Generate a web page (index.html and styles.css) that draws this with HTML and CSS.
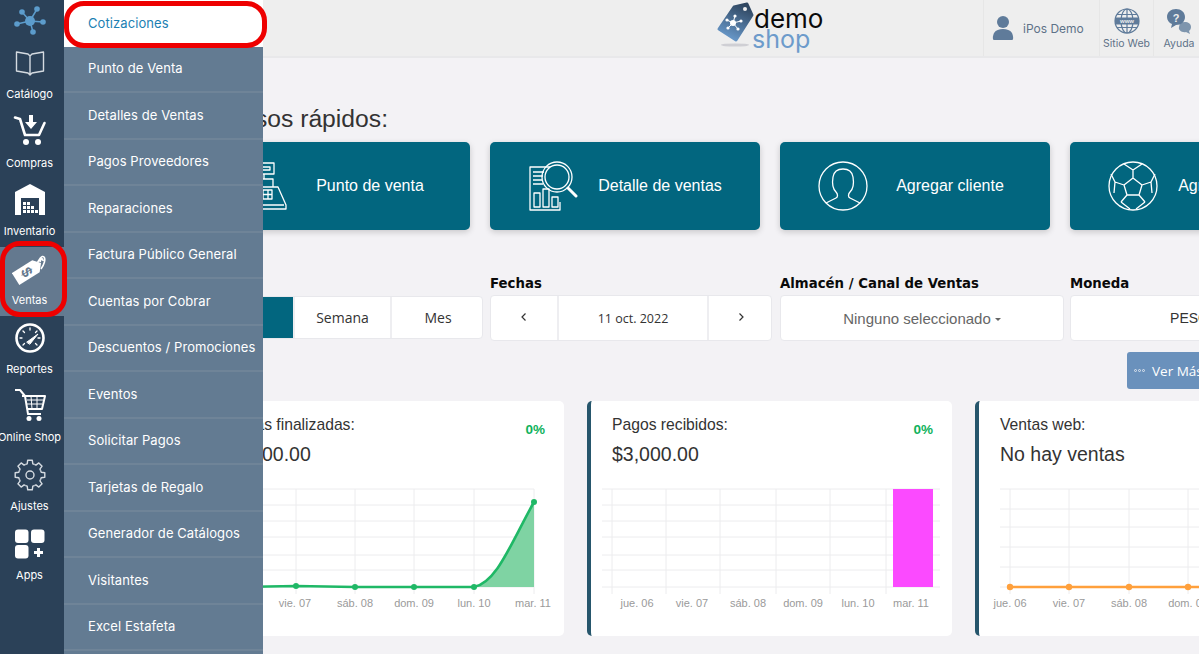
FILE: index.html
```html
<!DOCTYPE html>
<html lang="es">
<head>
    <meta charset="UTF-8">
    <meta name="viewport" content="width=device-width, initial-scale=1.0">
    <title>iPos Demo</title>
    <link rel="stylesheet" href="styles.css">
</head>
<body>
    <nav class="sidebar">
        <div class="brand">
            <svg width="36" height="36" viewBox="0 0 36 36" class="net">
                <path d="M18 18L10 9M18 18L25 6M18 18L31 19M18 18L21 29M18 18L5 21"/>
                <circle cx="18" cy="18" r="5"/><circle cx="10" cy="9" r="2.8"/><circle cx="25" cy="6" r="2.8"/>
                <circle cx="31" cy="19" r="2.8"/><circle cx="21" cy="29" r="2.8"/><circle cx="5" cy="21" r="2.8"/>
            </svg>
        </div>
        <a class="nav-item">
            <svg width="36" height="36" viewBox="0 0 36 36" class="thin">
                <path d="M4.5 7L16 9L18 11L20 9L31.5 7V26L20 28L18 30L16 28L4.5 26ZM18 11V30"/>
            </svg>
            <span>Catálogo</span>
        </a>
        <a class="nav-item">
            <svg width="36" height="36" viewBox="0 0 36 36" class="bold">
                <path d="M3 3.5L8 5L13 21H27L32.5 9"/>
                <circle class="solid" cx="14" cy="28" r="3"/><circle class="solid" cx="26" cy="28" r="3"/>
                <path class="solid" d="M17 1H21V8H25L19 15L13 8H17Z"/>
            </svg>
            <span>Compras</span>
        </a>
        <a class="nav-item">
            <svg width="36" height="36" viewBox="0 0 36 36">
                <path class="solid" d="M3 10L18 2L33 10V33H27V16H9V33H3Z"/>
                <path class="solid" d="M11 24h3v3h-3zM15 24h3v3h-3zM19 28h3v3h-3zM11 28h3v3h-3zM15 28h3v3h-3zM23 28h3v3h-3zM11 20h3v3h-3zM15 20h3v3h-3zM19 24h3v3h-3z"/>
            </svg>
            <span>Inventario</span>
        </a>
        <a class="nav-item active">
            <svg width="36" height="36" viewBox="0 0 36 36">
                <g transform="rotate(-32 18 19)">
                    <path class="solid" d="M1 12H25L31 19L25 26H1Z"/>
                    <text x="14" y="24" class="tag-sign" transform="rotate(90 14 19)">$</text>
                </g>
                <path class="loop" d="M24 15C27 8 30 4 32 6C34 8 32 14 29 18M28 11C29 7 31 7 31 10"/>
            </svg>
            <span>Ventas</span>
            <i class="ring ring-nav"></i>
        </a>
        <a class="nav-item">
            <svg width="36" height="36" viewBox="0 0 36 36" class="bold">
                <circle cx="18" cy="18" r="13.5" class="gauge"/>
                <path class="ticks" d="M18 8v2M11 11l1.5 1.5M8 18h2M26 18h2M25 11l-1.5 1.5M11 25l1.5-1.5M25 25l-1.5-1.5"/>
                <path class="needle" d="M15 22L26 14L18 24Z"/>
            </svg>
            <span>Reportes</span>
        </a>
        <a class="nav-item">
            <svg width="36" height="36" viewBox="0 0 36 36" class="cart">
                <path d="M3 2H8L13 8L16 26H29M10 8H33L30 21H15"/>
                <path class="cart-grid" d="M15 12H31M15 16H30M19 8L20 21M25 8V21"/>
                <circle class="solid" cx="17" cy="30.5" r="2.5"/><circle class="solid" cx="27" cy="30.5" r="2.5"/>
            </svg>
            <span>Online Shop</span>
        </a>
        <a class="nav-item">
            <svg width="36" height="36" viewBox="0 0 36 36" class="thin">
                <defs><path id="tooth" d="M13.6 7.4L15.2 6.8L15.7 3.2H20.3L20.8 6.8L22.4 7.4"/></defs>
                <use href="#tooth"/><use href="#tooth" transform="rotate(45 18 18)"/><use href="#tooth" transform="rotate(90 18 18)"/>
                <use href="#tooth" transform="rotate(135 18 18)"/><use href="#tooth" transform="rotate(180 18 18)"/><use href="#tooth" transform="rotate(225 18 18)"/>
                <use href="#tooth" transform="rotate(270 18 18)"/><use href="#tooth" transform="rotate(315 18 18)"/>
                <circle cx="18" cy="18" r="4"/>
            </svg>
            <span>Ajustes</span>
        </a>
        <a class="nav-item">
            <svg width="36" height="36" viewBox="0 0 36 36">
                <rect class="solid" x="3" y="3.5" width="13.5" height="13.5" rx="3"/><rect class="solid" x="19" y="3.5" width="13.5" height="13.5" rx="3"/>
                <rect class="solid" x="3" y="19" width="13.5" height="13.5" rx="3"/>
                <path class="solid" d="M25 22h3v3h3v3h-3v3h-3v-3h-3v-3h3z"/>
            </svg>
            <span>Apps</span>
        </a>
    </nav>

    <ul class="submenu">
        <li class="current">Cotizaciones<i class="ring ring-menu"></i></li>
        <li>Punto de Venta</li>
        <li>Detalles de Ventas</li>
        <li>Pagos Proveedores</li>
        <li>Reparaciones</li>
        <li>Factura Público General</li>
        <li>Cuentas por Cobrar</li>
        <li>Descuentos / Promociones</li>
        <li>Eventos</li>
        <li>Solicitar Pagos</li>
        <li>Tarjetas de Regalo</li>
        <li>Generador de Catálogos</li>
        <li>Visitantes</li>
        <li>Excel Estafeta</li>
    </ul>

    <div class="main">
        <header class="topbar">
            <div class="logo">
                <svg width="38" height="50" viewBox="0 0 38 50">
                    <defs>
                        <linearGradient id="tagfill" x1="0.7" y1="0" x2="0.3" y2="1">
                            <stop offset="0" stop-color="#2f4660"/><stop offset="1" stop-color="#6a9bcd"/>
                        </linearGradient>
                    </defs>
                    <ellipse cx="19" cy="45" rx="14" ry="1.6" fill="#cfcfd4"/>
                    <path d="M18 7L31 4L36 15L20 40L3 29Z" fill="url(#tagfill)" stroke="url(#tagfill)" stroke-width="3" stroke-linejoin="round"/>
                    <circle cx="29" cy="9" r="2" fill="#eeeeee"/>
                    <g class="logo-net">
                        <path d="M17 23L11 20M17 23L19 16M17 23L25 21M17 23L22 29M17 23L12 28"/>
                        <circle cx="17" cy="23" r="3"/><circle cx="11" cy="20" r="1.6"/><circle cx="19" cy="16" r="1.6"/>
                        <circle cx="25" cy="21" r="1.6"/><circle cx="22" cy="29" r="1.6"/><circle cx="12" cy="28" r="1.6"/>
                    </g>
                </svg>
                <div class="logo-text"><span class="demo">demo</span><span class="shop">shop</span></div>
            </div>
            <div class="top-actions">
                <div class="top-user">
                    <svg width="22" height="26" viewBox="0 0 22 26" class="top-icon">
                        <circle cx="11" cy="7" r="6"/>
                        <path d="M2 25C0 25 1 20 2 18C4 15 7 14 11 14C15 14 18 15 20 18C21 20 22 25 20 25Z"/>
                    </svg>
                    <span>iPos Demo</span>
                </div>
                <div class="top-link">
                    <svg width="26" height="26" viewBox="0 0 26 26" class="globe">
                        <circle cx="13" cy="13" r="12"/>
                        <ellipse cx="13" cy="13" rx="6" ry="12"/>
                        <path d="M13 1V25M3 6.5H23M3 19.5H23"/>
                        <rect class="band" x="1" y="9.5" width="24" height="7"/>
                        <text x="13" y="15.4" class="www">www</text>
                    </svg>
                    <span>Sitio Web</span>
                </div>
                <div class="top-link">
                    <svg width="26" height="26" viewBox="0 0 26 26" class="top-icon">
                        <path d="M14 15C19 13 25 14 25 19C25 21 24 22 23 23L24 26L20 24C16 25 12 22 13 19Z" class="bubble-back"/>
                        <path d="M10 1C15 1 19 4 19 9C19 14 15 17 10 17L5 20L6 16C3 15 1 12 1 9C1 4 5 1 10 1Z"/>
                        <text x="10" y="13.5" class="ask">?</text>
                    </svg>
                    <span>Ayuda</span>
                </div>
            </div>
        </header>

        <section class="content">
            <h2 class="page-title">Accesos rápidos:</h2>
            <div class="quick-row">
                <a class="quick">
                    <svg width="50" height="50" viewBox="0 0 50 50" class="line-icon">
                        <path transform="translate(2 0)" d="M14 2H34V13H14ZM18 6H30V9H18ZM24 13V18M15 18H33V26H15ZM15 26H10L2 44V48H46V44L38 26H33M4 44H44M18 29H32V38H18ZM18 33.500H32M23 29V38M28 29V38M9 41H20"/>
                    </svg>
                    <span>Punto de venta</span>
                </a>
                <a class="quick">
                    <svg width="50" height="50" viewBox="0 0 50 50" class="line-icon">
                        <path d="M22 6H2V49H32V41M5 11H16M5 15H15M5 19H14M5 23H15M6 32H12V46H6ZM15 28H21V46H15ZM24 36H30V46H24Z"/>
                        <circle cx="29" cy="16" r="15"/><circle cx="29" cy="16" r="12"/>
                        <path d="M40 27L48 35" class="handle"/>
                    </svg>
                    <span>Detalle de ventas</span>
                </a>
                <a class="quick">
                    <svg width="50" height="50" viewBox="0 0 50 50" class="line-icon">
                        <circle cx="25" cy="25" r="24"/>
                        <path d="M8 42L18 37C20 36 20 33 18 31C15 28 14 22 15 16C16 10 20 8 25 8C30 8 34 10 35 16C36 22 35 28 32 31C30 33 30 36 32 37L42 42"/>
                    </svg>
                    <span>Agregar cliente</span>
                </a>
                <a class="quick">
                    <svg width="50" height="50" viewBox="0 0 50 50" class="line-icon">
                        <circle cx="25" cy="25" r="24"/>
                        <path d="M25 17L34 24L31 34H19L16 24ZM25 17V9M16 24L7 21M34 24L43 21M19 34L13 41M31 34L37 41M16 3L25 9L34 3M7 21L3 13M7 21L6 32M43 21L47 13M43 21L44 32M13 41L22 48M37 41L28 48"/>
                    </svg>
                    <span>Agregar producto</span>
                </a>
            </div>

            <div class="filters">
                <div class="filter filter-range">
                    <label>&nbsp;</label>
                    <div class="btn-group range">
                        <span class="on"></span>
                        <span>Semana</span>
                        <span>Mes</span>
                    </div>
                </div>
                <div class="filter filter-date">
                    <label>Fechas</label>
                    <div class="btn-group date">
                        <span>
                            <svg width="8" height="10" viewBox="0 0 8 10" class="chev"><path d="M5.500 1.500L2 5L5.500 8.500"/></svg>
                        </span>
                        <span>11 oct. 2022</span>
                        <span>
                            <svg width="8" height="10" viewBox="0 0 8 10" class="chev"><path d="M2.500 1.500L6 5L2.500 8.500"/></svg>
                        </span>
                    </div>
                </div>
                <div class="filter filter-store">
                    <label>Almacén / Canal de Ventas</label>
                    <div class="select">Ninguno seleccionado <i class="caret"></i></div>
                </div>
                <div class="filter filter-money">
                    <label>Moneda</label>
                    <div class="select dark">PESO MXN <i class="caret"></i></div>
                </div>
            </div>

            <button class="more"><i class="dots"><b></b><b></b><b></b></i>Ver Más</button>

            <div class="stats">
                <article class="stat">
                    <div class="stat-head">
                        <div>
                            <p class="stat-title">Ventas finalizadas:</p>
                            <p class="stat-value">$3,000.00</p>
                        </div>
                        <b class="stat-pct">0%</b>
                    </div>
                    <svg width="361" height="140" viewBox="203 481 361 140" class="chart">
                        <path class="grid" d="M205 489H534M205 505H534M205 521H534M205 537H534M205 555H534M205 570H534M205 587H534"/>
                        <path class="grid" d="M236 489V594M296 489V594M355 489V594M414 489V594M474 489V594M534 489V594"/>
                        <path class="area-green" d="M474 587C497 582 510 545 534 502V587Z"/>
                        <path class="line-green" d="M236 587L296 586L355 587H474C497 582 510 545 534 502"/>
                        <g class="dot-green">
                            <circle cx="236" cy="587" r="3"/><circle cx="296" cy="586" r="3"/><circle cx="355" cy="587" r="3"/>
                            <circle cx="414" cy="587" r="3"/><circle cx="474" cy="587" r="3"/><circle cx="534" cy="502" r="3"/>
                        </g>
                        <g class="tick">
                            <text x="236" y="607">jue. 06</text><text x="295" y="607">vie. 07</text><text x="355" y="607">sáb. 08</text>
                            <text x="414" y="607">dom. 09</text><text x="474" y="607">lun. 10</text><text x="533" y="607">mar. 11</text>
                        </g>
                    </svg>
                </article>

                <article class="stat">
                    <div class="stat-head">
                        <div>
                            <p class="stat-title">Pagos recibidos:</p>
                            <p class="stat-value">$3,000.00</p>
                        </div>
                        <b class="stat-pct">0%</b>
                    </div>
                    <svg width="361" height="140" viewBox="591 481 361 140" class="chart">
                        <path class="grid" d="M602 489H940M602 505H940M602 521H940M602 537H940M602 555H940M602 570H940M602 587H940"/>
                        <path class="grid" d="M612 489V594M666 489V594M720 489V594M776 489V594M830 489V594M886 489V594"/>
                        <rect class="bar" x="893" y="489" width="40" height="98"/>
                        <g class="tick">
                            <text x="637" y="607">jue. 06</text><text x="692" y="607">vie. 07</text><text x="748" y="607">sáb. 08</text>
                            <text x="803" y="607">dom. 09</text><text x="858" y="607">lun. 10</text><text x="911" y="607">mar. 11</text>
                        </g>
                    </svg>
                </article>

                <article class="stat">
                    <div class="stat-head">
                        <div>
                            <p class="stat-title">Ventas web:</p>
                            <p class="stat-value">No hay ventas</p>
                        </div>
                    </div>
                    <svg width="361" height="140" viewBox="979 481 361 140" class="chart">
                        <path class="grid" d="M1000 489H1340M1000 509H1340M1000 527H1340M1000 547H1340M1000 567H1340M1000 587H1340"/>
                        <path class="grid" d="M1010 489V594M1069 489V594M1129 489V594M1188 489V594"/>
                        <path class="line-orange" d="M1010 587H1340"/>
                        <g class="dot-orange">
                            <circle cx="1010" cy="587" r="3.200"/><circle cx="1069" cy="587" r="3.200"/>
                            <circle cx="1129" cy="587" r="3.200"/><circle cx="1188" cy="587" r="3.200"/>
                        </g>
                        <g class="tick">
                            <text x="1010" y="607">jue. 06</text><text x="1069" y="607">vie. 07</text>
                            <text x="1129" y="607">sáb. 08</text><text x="1188" y="607">dom. 09</text>
                        </g>
                    </svg>
                </article>
            </div>
        </section>
    </div>
</body>
</html>
```

FILE: styles.css
```css
* {
    box-sizing: border-box;
}
html, body {
    margin: 0;
    height: 100%;
    overflow: hidden;
}
body {
    display: flex;
    background-color: #f3f2f5;
    font-family: "Liberation Sans", Arial, sans-serif;
    color: #333;
}

/* left rail */
.sidebar {
    flex: 0 0 64px;
    min-width: 0;
    height: 654px;
    padding-right: 5px;
    background-color: #2b4158;
    color: #fff;
    position: relative;
    z-index: 20;
}
.brand {
    height: 41px;
    display: flex;
    align-items: center;
    justify-content: center;
    padding-top: 1px;
}
.nav-item {
    position: relative;
    height: 68.700px;
    margin-right: -5px;
    padding: 4px 5px 0 0;
    display: flex;
    flex-direction: column;
    align-items: center;
    font-family: Inter, sans-serif;
    font-size: 11px;
    line-height: 14px;
    white-space: nowrap;
}
.nav-item svg {
    display: block;
    margin-bottom: 6px;
    flex: none;
    fill: none;
}
.nav-item.active {
    background-color: #64798f;
}
.net circle {
    fill: #5c9ccc;
}
.net path {
    stroke: #5c9ccc;
    stroke-width: 1.5;
    fill: none;
}
.nav-item .solid {
    fill: #fff;
    stroke: none;
}
.thin path, .thin circle, .thin use {
    stroke: #d5dbe1;
    stroke-width: 1.4;
    fill: none;
    stroke-linejoin: round;
}
.bold path {
    stroke: #fff;
    stroke-width: 2.600;
    fill: none;
    stroke-linecap: round;
    stroke-linejoin: round;
}
.bold .solid {
    stroke: none;
    fill: #fff;
}
.gauge {
    stroke: #fff;
    stroke-width: 2.600;
    fill: #2b4158;
}
.bold .ticks {
    stroke-width: 1.300;
}
.bold .needle {
    stroke-width: 1;
    fill: #fff;
}
.cart path {
    stroke: #fff;
    stroke-width: 2;
    fill: none;
    stroke-linejoin: round;
}
.cart .cart-grid {
    stroke-width: 1;
}
.tag-sign {
    fill: #64798f;
    font-family: "Liberation Sans", sans-serif;
    font-size: 15px;
    font-weight: bold;
    text-anchor: middle;
}
.loop {
    stroke: #fff;
    stroke-width: 1.600;
    fill: none;
}
.ring {
    position: absolute;
    border: 5px solid #ee0000;
    pointer-events: none;
}
.ring-nav {
    left: 0;
    top: -6px;
    width: 67px;
    height: 76px;
    border-radius: 20px;
    z-index: 30;
}
.ring-menu {
    left: 0;
    top: 1px;
    width: 203px;
    height: 47px;
    border-radius: 20px;
}

/* flyout over the page */
.submenu {
    position: absolute;
    left: 64px;
    top: 0;
    z-index: 15;
    width: 199px;
    height: 654px;
    margin: 0;
    padding: 0;
    list-style: none;
    background-color: #637b92;
    color: #fff;
    font-family: Inter, sans-serif;
    font-size: 13px;
    letter-spacing: 0.08px;
}
.submenu li {
    position: relative;
    height: 46.500px;
    padding: 0 0 1px 24px;
    display: flex;
    align-items: center;
    white-space: nowrap;
    border-bottom: 2px solid #6f8498;
}
.submenu .current {
    background-color: #fff;
    color: #1b7fb3;
    border-bottom: 0;
}

.main {
    flex: 1;
    min-width: 0;
    height: 654px;
    overflow: hidden;
}

/* top bar */
.topbar {
    height: 58px;
    display: flex;
    background-color: #eeeeee;
    border-bottom: 2px solid #e8e8ea;
}
.logo {
    margin-left: 652px;
    display: flex;
    align-items: flex-start;
}
.logo-net path {
    stroke: #fff;
    stroke-width: 1;
}
.logo-net circle {
    fill: #fff;
}
.logo-text {
    display: flex;
    flex-direction: column;
    font-family: Inter, sans-serif;
    line-height: 20px;
    padding-top: 9px;
}
.demo {
    color: #0b0b0b;
    font-size: 26px;
}
.shop {
    color: #6d9bcb;
    font-size: 25px;
    margin-left: -2px;
}
.top-actions {
    margin-left: auto;
    display: flex;
    height: 56px;
    font-family: Inter, sans-serif;
    color: #5e7288;
}
.top-user {
    width: 116px;
    padding-left: 8px;
    display: flex;
    align-items: center;
    gap: 9px;
    font-size: 12px;
    border-left: 1px solid #e6e6e6;
}
.top-link {
    width: 54px;
    padding-top: 8px;
    display: flex;
    flex-direction: column;
    align-items: center;
    gap: 3px;
    font-size: 10.500px;
    border-left: 1px solid #e6e6e6;
    white-space: nowrap;
}
.top-link:last-child {
    width: 46px;
    padding-left: 5px;
}
.top-icon {
    fill: #5f7b9a;
}
.globe {
    fill: none;
    stroke: #5f7b9a;
    stroke-width: 1.200;
}
.globe .band {
    fill: #5f7b9a;
    stroke: none;
}
.www {
    fill: #eeeeee;
    stroke: none;
    font-family: "Liberation Sans", sans-serif;
    font-size: 6px;
    font-weight: bold;
    text-anchor: middle;
}
.ask {
    fill: #eeeeee;
    font-family: "Liberation Sans", sans-serif;
    font-size: 11px;
    font-weight: bold;
    text-anchor: middle;
}
.bubble-back {
    fill: #7e95ad;
}

/* page */
.content {
    width: 1300px;
    padding-left: 136px;
}
.page-title {
    margin: 46px 0 0;
    font-size: 24.700px;
    font-weight: normal;
    line-height: 30px;
}
.quick-row {
    display: flex;
    gap: 20px;
    margin-top: 8px;
}
.quick {
    flex: 0 0 270px;
    height: 88px;
    padding: 0 18px 0 38px;
    display: flex;
    align-items: center;
    background-color: #02667f;
    border-radius: 5px;
    box-shadow: 0 2px 6px rgba(0, 0, 0, 0.18);
    color: #fff;
    font-size: 16px;
}
.quick span {
    flex: 1;
    text-align: center;
}
.line-icon {
    flex: none;
    fill: none;
    stroke: #fff;
    stroke-width: 1.300;
    stroke-linejoin: round;
}
.line-icon .handle {
    stroke-width: 3;
    stroke-linecap: round;
}

.filters {
    display: flex;
    margin-top: 44px;
}
.filter label {
    display: block;
    height: 21px;
    font-family: "DejaVu Sans", sans-serif;
    font-size: 13.300px;
    font-weight: bold;
    line-height: 20px;
    color: #0a0a0a;
    white-space: nowrap;
}
.filter-range, .filter-date, .filter-store, .filter-money {
    flex: 0 0 290px;
}
.btn-group {
    display: flex;
    background-color: #fff;
    border: 1px solid #e8e8ec;
    border-radius: 4px;
    font-family: "Open Sans", sans-serif;
    font-size: 14px;
    color: #333;
    overflow: hidden;
}
.btn-group span {
    display: flex;
    align-items: center;
    justify-content: center;
    border-left: 2px solid #eeeef1;
}
.btn-group span:first-child {
    border-left: 0;
}
.range {
    width: 283px;
    height: 43px;
    margin-top: 1px;
}
.range span {
    flex: 0 0 97px;
}
.range span:first-child {
    flex: 0 0 92px;
}
.range span:last-child {
    flex: 0 0 94px;
}
.range .on {
    background-color: #02667f;
}
.date {
    width: 282px;
    height: 46px;
    font-size: 12.500px;
}
.date span {
    flex: 0 0 66px;
}
.date span:nth-child(2) {
    flex: 0 0 150px;
}
.chev {
    fill: none;
    stroke: #333;
    stroke-width: 1.200;
    margin-bottom: 3px;
}
.select {
    width: 284px;
    height: 46px;
    display: flex;
    align-items: center;
    justify-content: center;
    gap: 4px;
    background-color: #fff;
    border: 1px solid #e8e8ec;
    border-radius: 4px;
    font-size: 15px;
    color: #666;
    white-space: nowrap;
}
.select.dark {
    color: #333;
    font-size: 14px;
}
.caret {
    width: 0;
    height: 0;
    margin-top: 2px;
    border: 3.500px solid transparent;
    border-top-color: #666;
    border-bottom: 0;
}
.more {
    display: flex;
    align-items: center;
    gap: 7px;
    width: 110px;
    height: 37px;
    margin: 11px 0 0 927px;
    padding: 0 0 0 7px;
    background-color: #6a91bc;
    border: 0;
    border-radius: 3px;
    color: #fff;
    font-family: "Open Sans", sans-serif;
    font-size: 13.500px;
    white-space: nowrap;
}
.dots {
    display: flex;
    gap: 1px;
}
.dots b {
    width: 3px;
    height: 3px;
    border: 1px solid #dfe7f0;
    border-radius: 50%;
}

/* stat cards */
.stats {
    display: flex;
    gap: 23px;
    margin: 12px 0 0 -1px;
}
.stat {
    flex: 0 0 365px;
    height: 235px;
    background-color: #fff;
    border-left: 4px solid #26566c;
    border-radius: 5px;
}
.stat-head {
    display: flex;
    justify-content: space-between;
    height: 80px;
    padding: 14px 19px 0 21px;
}
.stat-title {
    margin: 0;
    font-size: 15.700px;
    line-height: 20px;
}
.stat-value {
    margin: 7px 0 0;
    font-size: 19.500px;
    line-height: 24px;
}
.stat-pct {
    margin-top: 7px;
    font-size: 13.500px;
    color: #10b25c;
}
.chart {
    display: block;
    overflow: hidden;
}
.grid {
    stroke: #ececee;
    stroke-width: 1;
    fill: none;
}
.area-green {
    fill: #7fd3a3;
}
.line-green {
    stroke: #1fb866;
    stroke-width: 2.600;
    fill: none;
}
.dot-green {
    fill: #1fb866;
}
.line-orange {
    stroke: #ffa03c;
    stroke-width: 2.600;
    fill: none;
}
.dot-orange {
    fill: #ffa03c;
}
.bar {
    fill: #fb4aff;
}
.tick text {
    fill: #9a9a9a;
    font-size: 11px;
    text-anchor: middle;
}
```
